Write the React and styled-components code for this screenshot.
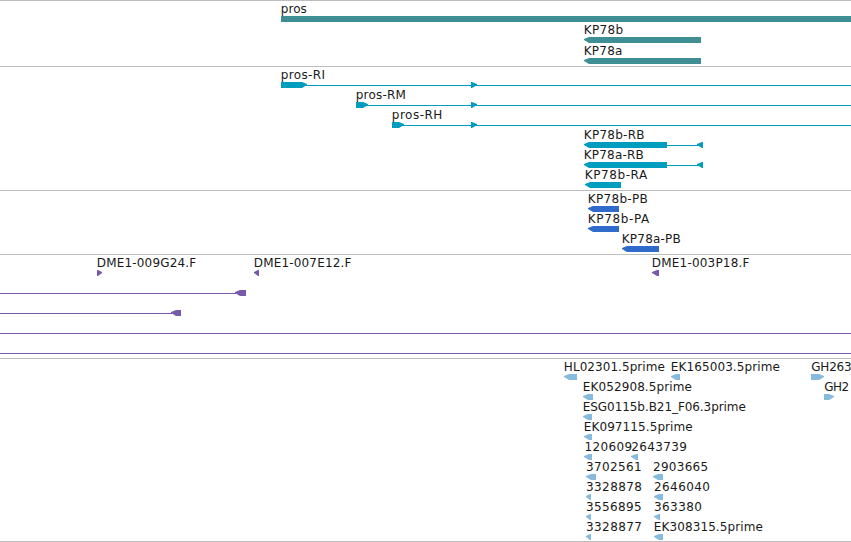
import React from 'react';
import styled, { createGlobalStyle } from 'styled-components';

const FONT = '"DejaVu Sans", sans-serif';
const SIZE = 12;

// labels are [text, first x, last x], lines are [from, to],
// features are {x, w, dir}, all in pixels along the sequence
const tracks = [
  {
    id: 'genes', color: '#3e8e94', height: 65, pitch: 21,
    rows: [
      { labels: [['pros', 281.8, 306.5]], features: [{ x: 281, w: 570 }] },
      { labels: [['KP78b', 584.8, 622.5]], features: [{ x: 584, w: 117, dir: 'left' }] },
      { labels: [['KP78a', 584.8, 622]], features: [{ x: 584, w: 117, dir: 'left' }] },
    ],
  },
  {
    id: 'transcripts', color: '#009dbf', height: 123, pitch: 20,
    rows: [
      { labels: [['pros-RI', 281.8, 324.5]], lines: [[305, 851]], features: [{ x: 281, w: 26, dir: 'right' }, { x: 471, w: 6, dir: 'right' }] },
      { labels: [['pros-RM', 356.8, 405.5]], lines: [[366, 851]], features: [{ x: 356, w: 12, dir: 'right' }, { x: 471, w: 6, dir: 'right' }] },
      { labels: [['pros-RH', 392.8, 441.3]], lines: [[401, 851]], features: [{ x: 392, w: 12, dir: 'right' }, { x: 471, w: 6, dir: 'right' }] },
      { labels: [['KP78b-RB', 584.8, 644.3]], lines: [[667, 699]], features: [{ x: 584, w: 83, dir: 'left' }, { x: 697, w: 6, dir: 'left' }] },
      { labels: [['KP78a-RB', 584.8, 643.5]], lines: [[667, 699]], features: [{ x: 584, w: 83, dir: 'left' }, { x: 697, w: 6, dir: 'left' }] },
      { labels: [['KP78b-RA', 585.8, 648]], features: [{ x: 585, w: 36, dir: 'left' }] },
    ],
  },
  {
    id: 'proteins', color: '#306bcc', height: 63, pitch: 20,
    rows: [
      { labels: [['KP78b-PB', 588.8, 647.5]], features: [{ x: 588, w: 31, dir: 'left' }] },
      { labels: [['KP78b-PA', 588.8, 650]], features: [{ x: 588, w: 31, dir: 'left' }] },
      { labels: [['KP78a-PB', 622.8, 680.5]], features: [{ x: 622, w: 37, dir: 'left' }] },
    ],
  },
  {
    id: 'clones', color: '#775aab', height: 103, pitch: 20,
    rows: [
      {
        labels: [['DME1-009G24.F', 97.8, 196.3], ['DME1-007E12.F', 254.8, 351.5], ['DME1-003P18.F', 652.8, 749.5]],
        features: [{ x: 97, w: 5, dir: 'right' }, { x: 254, w: 5, dir: 'left' }, { x: 652, w: 7, dir: 'left' }],
      },
      { lines: [[0, 236]], features: [{ x: 235, w: 11, dir: 'left' }] },
      { lines: [[0, 172]], features: [{ x: 171, w: 10, dir: 'left' }] },
      { lines: [[0, 851]] },
      { lines: [[0, 851]] },
    ],
  },
  {
    id: 'ests', color: '#87bbdd', height: 182, pitch: 20,
    rows: [
      {
        labels: [['HL02301.5prime', 564.8, 664.5], ['EK165003.5prime', 671.8, 779.5], ['GH263', 811.3, 851]],
        features: [{ x: 564, w: 13, dir: 'left' }, { x: 671, w: 9, dir: 'left' }, { x: 811, w: 13, dir: 'right' }],
      },
      {
        labels: [['EK052908.5prime', 583.8, 691.5], ['GH2', 824.3, 848.5]],
        features: [{ x: 583, w: 10, dir: 'left' }, { x: 824, w: 10, dir: 'right' }],
      },
      { labels: [['ESG0115b.B21_F06.3prime', 583.8, 745.5]], features: [{ x: 583, w: 9, dir: 'left' }] },
      { labels: [['EK097115.5prime', 584.8, 692.3]], features: [{ x: 584, w: 8, dir: 'left' }] },
      {
        labels: [['120609', 585.5, 631.5], ['2643739', 631.2, 686.3]],
        features: [{ x: 584, w: 8, dir: 'left' }, { x: 631, w: 7, dir: 'left' }],
      },
      {
        labels: [['3702561', 586, 641], ['2903665', 653, 707.5]],
        features: [{ x: 586, w: 10, dir: 'left' }, { x: 653, w: 10, dir: 'left' }],
      },
      {
        labels: [['3328878', 586, 641.3], ['2646040', 654, 709.3]],
        features: [{ x: 586, w: 5, dir: 'left' }, { x: 654, w: 9, dir: 'left' }],
      },
      {
        labels: [['3556895', 586, 641], ['363380', 654, 701.3]],
        features: [{ x: 586, w: 5, dir: 'left' }, { x: 654, w: 6, dir: 'left' }],
      },
      {
        labels: [['3328877', 586, 641.3], ['EK308315.5prime', 654.8, 762.5]],
        features: [{ x: 586, w: 5, dir: 'left' }, { x: 654, w: 9, dir: 'left' }],
      },
    ],
  },
];

const ctx = document.createElement('canvas').getContext('2d');

// spreads the letters so that the label covers from..to
const fit = (text, from, to) => {
  ctx.font = `${SIZE}px ${FONT}`;
  const m = ctx.measureText(text);
  const ink = m.actualBoundingBoxRight + m.actualBoundingBoxLeft;
  return {
    left: from + m.actualBoundingBoxLeft,
    letterSpacing: (to - from - ink) / (text.length - 1),
  };
};

const arrow = ({ x, w, dir }) => {
  const head = Math.min(w, 6);
  if (dir === 'left') {
    const n = x + head;
    return `M${x} 2 L${n - 1} 0 H${x + w} V6 H${n - 1} L${x} 3 Z`;
  }
  if (dir === 'right') {
    const n = x + w - head;
    return `M${x} 0 H${n + 1} L${x + w} 2 V3 L${n + 1} 6 H${x} Z`;
  }
  return `M${x} 0 H${x + w} V6 H${x} Z`;
};

export default function App() {
  return (
    <>
      <GlobalStyle />
      <Browser>
        {tracks.map((track) => (
          <Track key={track.id} $height={track.height}>
            {track.rows.map((row, i) => (
              <Row key={i} $height={track.pitch}>
                <Names>
                  {(row.labels || []).map(([text, from, to]) => (
                    <Name key={text} style={fit(text, from, to)}>{text}</Name>
                  ))}
                </Names>
                <Glyphs width="851" height="6" $color={track.color}>
                  {(row.lines || []).map(([a, b]) => (
                    <rect key={a} x={a} y="3" width={b - a} height="1" />
                  ))}
                  {(row.features || []).map((f) => (
                    <path key={f.x} d={arrow(f)} />
                  ))}
                </Glyphs>
              </Row>
            ))}
          </Track>
        ))}
      </Browser>
    </>
  );
}

const GlobalStyle = createGlobalStyle`
  body {
    margin: 0;
    background: #fff;
    overflow: hidden;
  }
`;

const Browser = styled.main`
  width: 851px;
  height: 542px;
  box-sizing: border-box;
  border-bottom: 1px solid #bebebe;
  overflow: hidden;
  font-family: ${FONT};
  font-size: ${SIZE}px;
  color: #1a1a1a;
`;

const Track = styled.section`
  height: ${(p) => p.$height}px;
  border-top: 1px solid #bebebe;
`;

const Row = styled.div`
  height: ${(p) => p.$height}px;
`;

const Names = styled.div`
  position: relative;
  height: 15px;
`;

const Name = styled.span`
  position: absolute;
  top: 0;
  line-height: 17px;
  white-space: pre;
`;

const Glyphs = styled.svg`
  display: block;
  fill: ${(p) => p.$color};
`;
